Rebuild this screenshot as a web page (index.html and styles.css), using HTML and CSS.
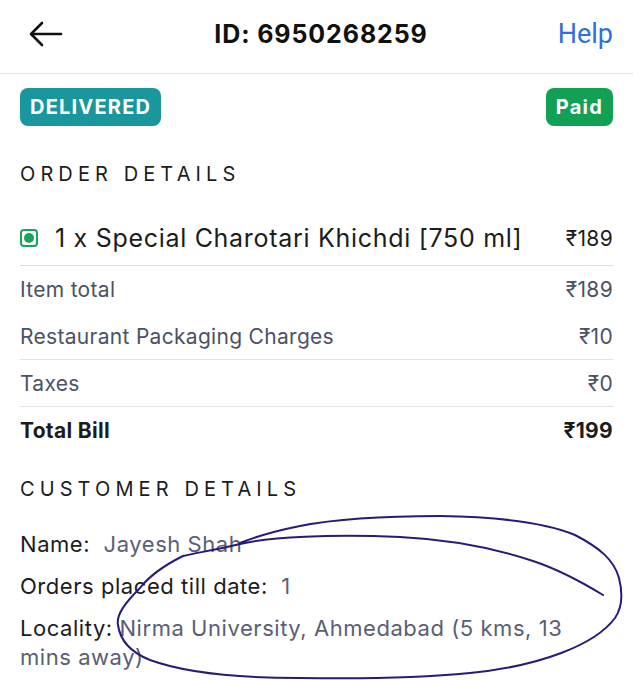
FILE: index.html
```html
<!DOCTYPE html>
<html lang="en">
<head>
<meta charset="utf-8">
<title>Order 6950268259</title>
<link rel="stylesheet" href="styles.css">
</head>
<body>
<div class="page">
  <header class="topbar">
    <button class="back" aria-label="Back">
      <svg width="34" height="26" viewBox="0 0 34 26" fill="none" stroke="#111" stroke-width="2.6" stroke-linecap="round" stroke-linejoin="round">
        <path d="M32 13H3"/>
        <path d="M13 2L2 13l11 11"/>
      </svg>
    </button>
    <h1 class="title">ID: 6950268259</h1>
    <a class="help">Help</a>
  </header>

  <main class="content">
    <div class="badges">
      <span class="badge badge-delivered">DELIVERED</span>
      <span class="badge badge-paid">Paid</span>
    </div>

    <h2 class="section-title">ORDER DETAILS</h2>

    <div class="item-row">
      <span class="veg"><span class="veg-dot"></span></span>
      <span class="item-name">1 x Special Charotari Khichdi [750 ml]</span>
      <span class="item-price">₹189</span>
    </div>

    <div class="bill">
      <div class="bill-row"><span>Item total</span><span>₹189</span></div>
      <div class="bill-row bordered"><span>Restaurant Packaging Charges</span><span>₹10</span></div>
      <div class="bill-row bordered"><span>Taxes</span><span>₹0</span></div>
      <div class="bill-row total"><span>Total Bill</span><span>₹199</span></div>
    </div>

    <h2 class="section-title customer-title">CUSTOMER DETAILS</h2>

    <div class="customer">
      <p class="cust-row"><span class="label">Name:</span>&nbsp; <span class="value">Jayesh Shah</span></p>
      <p class="cust-row"><span class="label">Orders placed till date:</span>&nbsp; <span class="value">1</span></p>
      <p class="cust-row"><span class="label">Locality:</span> <span class="value">Nirma University, Ahmedabad (5 kms, 13 mins away)</span></p>
    </div>
  </main>

  <svg class="scribble" width="633" height="680" viewBox="0 0 633 680" fill="none">
    <path d="M603 595 C585 584 560 570 533 561 C500 550 460 540 400 537 C330 534 270 537 240 544 C215 550 195 553 183 556 C165 565 150 575 140 588 C125 603 116 615 118 625 C120 640 130 652 150 660 C180 671 230 678 300 678 C360 679 420 678 470 673 C540 666 595 645 615 618 C624 605 622 590 619 578 C614 560 600 548 575 535 C545 522 500 517 440 516 C380 516 330 520 300 526 C275 531 255 537 240 543" stroke="#2a1a78" stroke-width="2" stroke-linecap="round" stroke-linejoin="round"/>
  </svg>
</div>
</body>
</html>
```

FILE: styles.css
```css
* {
  box-sizing: border-box;
}

html, body {
  margin: 0;
  padding: 0;
  background: #ffffff;
}

body {
  font-family: "Inter", "Noto Sans", "DejaVu Sans", sans-serif;
  color: #1c1c1c;
}

.page {
  position: relative;
  width: 633px;
  height: 680px;
  overflow: hidden;
}

.topbar {
  display: grid;
  grid-template-columns: 1fr auto 1fr;
  align-items: center;
  height: 74px;
  padding: 0 20px 0 29px;
  border-bottom: 1.5px solid #e6e6e6;
}

.back {
  justify-self: start;
  display: flex;
  align-items: center;
  background: none;
  border: 0;
  padding: 0;
  margin-top: -6px;
}

.title {
  margin: 0;
  margin-top: -6px;
  font-size: 25px;
  font-weight: 700;
  color: #111;
  letter-spacing: 0.9px;
}

.help {
  justify-self: end;
  margin-top: -6px;
  font-family: "Roboto", "Liberation Sans", sans-serif;
  font-size: 27px;
  color: #2f6fd8;
}

.content {
  padding: 14px 20px 0 20px;
}

.badges {
  display: flex;
  justify-content: space-between;
  align-items: center;
}

.badge {
  display: inline-flex;
  align-items: center;
  height: 38px;
  padding: 0 10px 0 10px;
  border-radius: 8px;
  color: #fff;
  font-size: 20px;
  font-weight: 700;
  letter-spacing: 1.2px;
}

.badge-delivered {
  background: #19979d;
}

.badge-paid {
  background: #12a055;
}

.section-title {
  margin: 36px 0 0 0;
  font-size: 20px;
  line-height: 24px;
  font-weight: 400;
  letter-spacing: 5.1px;
  color: #1c1c1c;
}

.item-row {
  display: flex;
  align-items: center;
  margin-top: 37px;
  height: 30px;
}

.veg {
  display: flex;
  align-items: center;
  justify-content: center;
  width: 18px;
  height: 18px;
  border: 2px solid #1aa35a;
  border-radius: 4px;
  margin-right: 17px;
  flex: none;
}

.veg-dot {
  width: 10px;
  height: 10px;
  border-radius: 50%;
  background: #1aa35a;
}

.item-name {
  font-size: 25px;
  letter-spacing: 0.7px;
  color: #1c1c1c;
  flex: 1;
}

.item-price {
  font-size: 21px;
  letter-spacing: 0.3px;
  color: #1c1c1c;
}

.bill {
  margin-top: 12px;
  border-top: 1.5px solid #dcdcdc;
}

.bill-row {
  display: flex;
  justify-content: space-between;
  align-items: center;
  height: 47px;
  font-size: 21px;
  letter-spacing: 0.3px;
  color: #4b5264;
}

.bill-row.bordered {
  border-bottom: 1.5px solid #e2e2e2;
}

.bill-row.total {
  font-weight: 700;
  color: #1c1c1c;
}

.customer-title {
  margin-top: 23px;
}

.customer {
  margin-top: 29px;
}

.cust-row {
  margin: 0 0 13px 0;
  font-size: 22px;
  letter-spacing: 0.55px;
  line-height: 29px;
}

.label {
  color: #1c1c1c;
}

.value {
  color: #5a6073;
}

.scribble {
  position: absolute;
  top: 0;
  left: 0;
  pointer-events: none;
}
```
